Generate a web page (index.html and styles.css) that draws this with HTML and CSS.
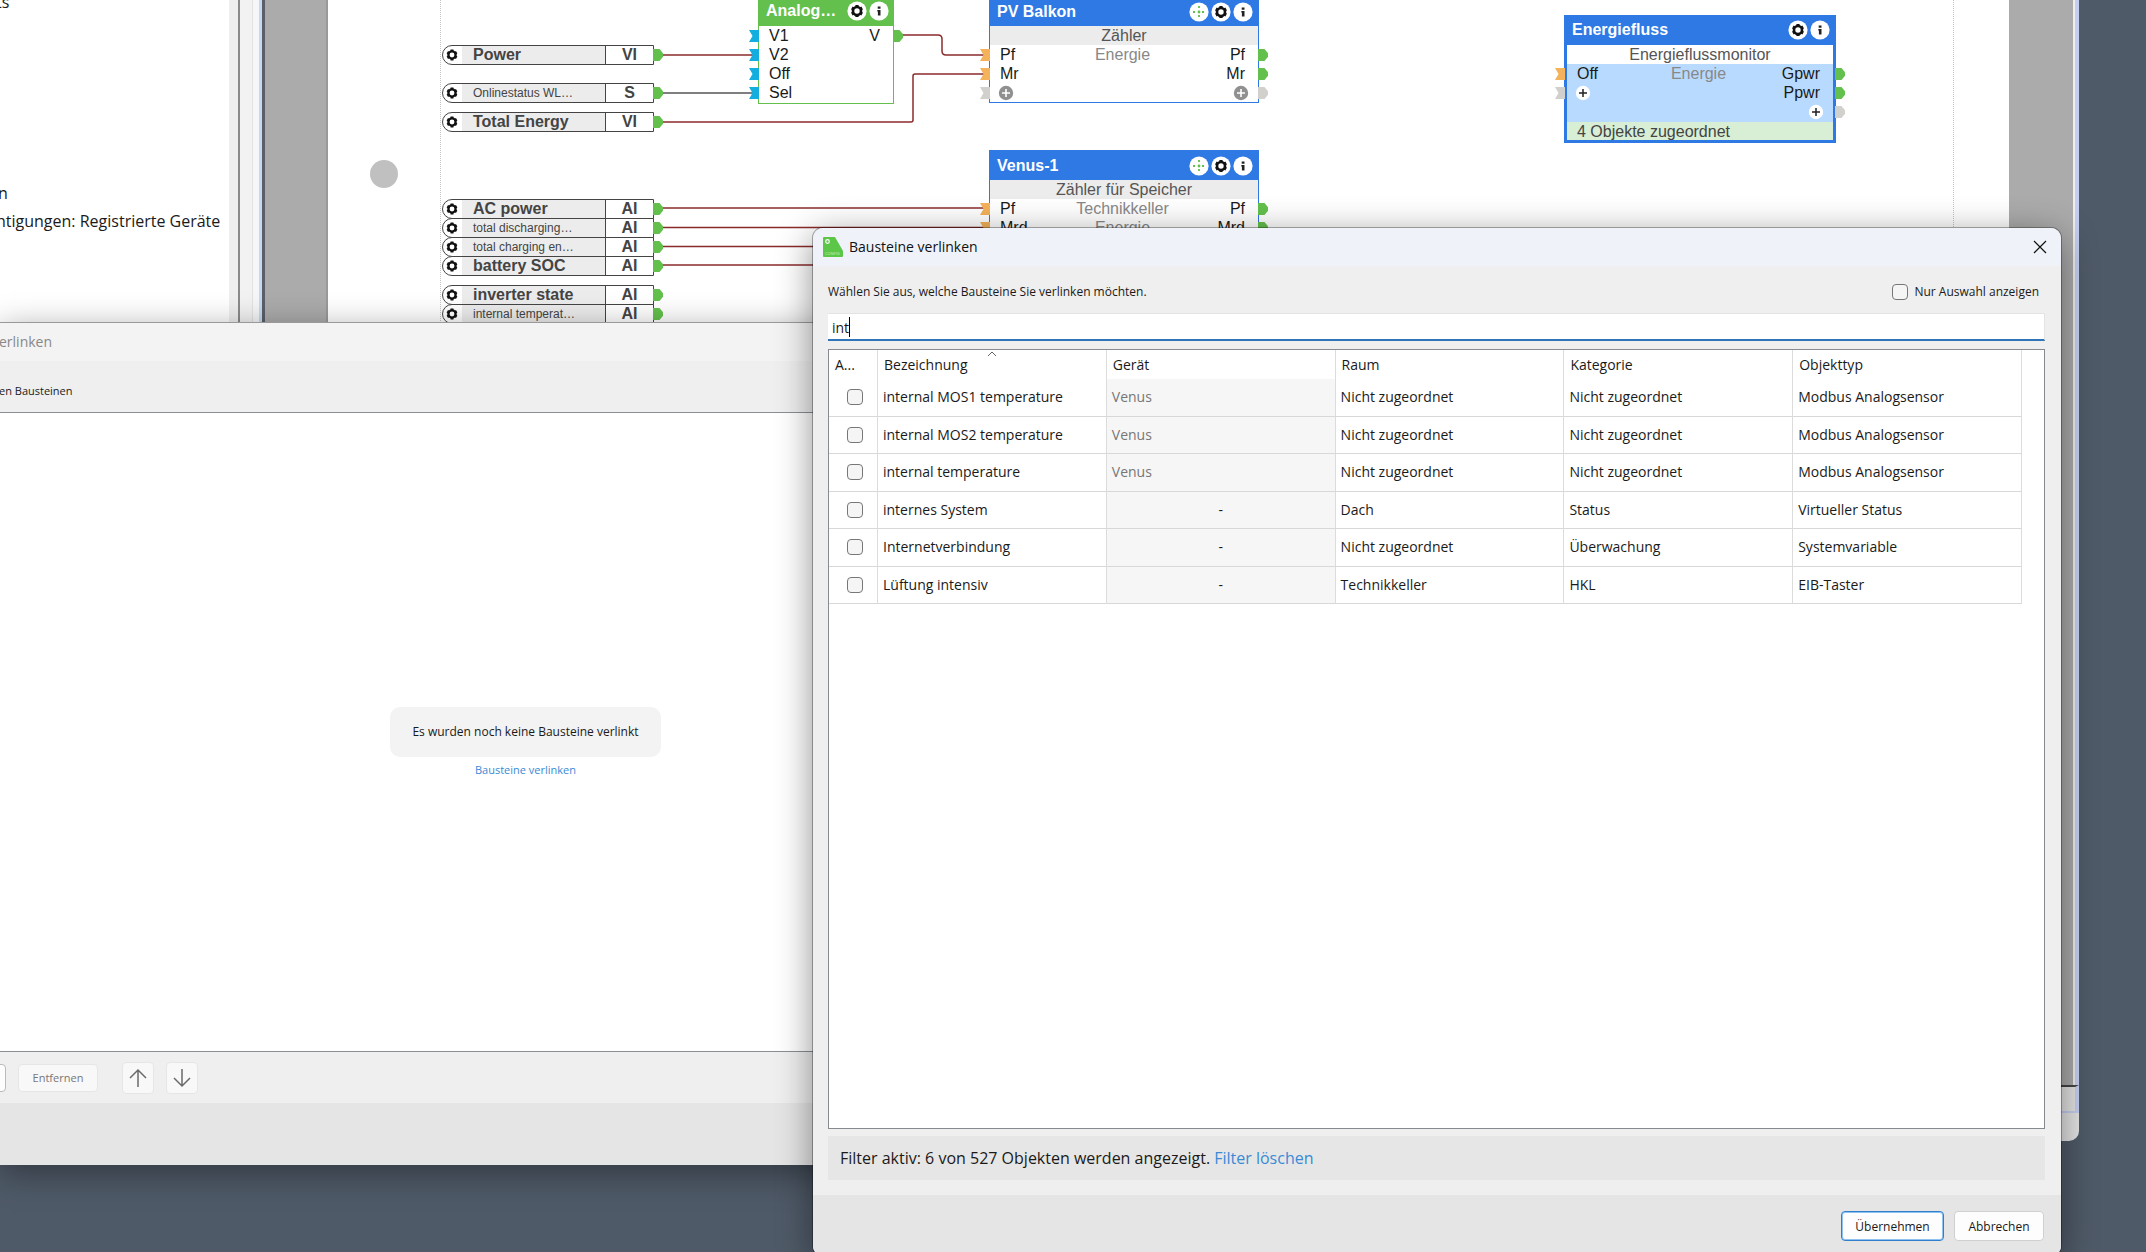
FILE: index.html
```html
<!DOCTYPE html>
<html lang="de">
<head>
<meta charset="utf-8">
<title>Bausteine verlinken</title>
<link rel="stylesheet" href="styles.css">
</head>
<body>
<svg class="defs" aria-hidden="true">
  <symbol id="gear" viewBox="0 0 20 20">
    <circle cx="10" cy="10" r="4" fill="none" stroke="#111" stroke-width="2.6"/>
    <path d="M10 4v2.500M10 13.500v2.500M4.800 7l2.100 1.200M13.100 11.800l2.100 1.200M4.800 13l2.100-1.200M13.100 8.200l2.100-1.200" stroke="#111" stroke-width="3.200"/>
  </symbol>
  <symbol id="gear-disc" viewBox="0 0 20 20"><circle cx="10" cy="10" r="9.600" fill="#fff"/><use href="#gear"/></symbol>
  <symbol id="info" viewBox="0 0 20 20"><circle cx="10" cy="10" r="9.600" fill="#fff"/><path d="M8.700 5.500h2.800v2.300h-2.800zM8.300 8.900h3.200v5.700h-2.600v-4h-.6z" fill="#222"/></symbol>
  <symbol id="move" viewBox="0 0 20 20"><circle cx="10" cy="10" r="9.600" fill="#fff"/><path d="M10 4v3M10 13v3M4 10h3M13 10h3M10 9v2" stroke="#5fc04a" stroke-width="1.800" stroke-dasharray="2 1"/><circle cx="10" cy="10" r="1.400" fill="#5fc04a"/></symbol>
  <symbol id="plus-grey" viewBox="0 0 16 16"><circle cx="8" cy="8" r="7.200" fill="#909090"/><path d="M8 4v8M4 8h8" stroke="#fff" stroke-width="1.600"/></symbol>
  <symbol id="plus-white" viewBox="0 0 16 16"><circle cx="8" cy="8" r="7.200" fill="#fff"/><path d="M8 4v8M4 8h8" stroke="#222" stroke-width="1.500"/></symbol>
</svg>

<main class="desktop">
  <section class="main-window">
    <div class="main-body">
      <ul class="tree">
        <li class="tree-first">ts</li>
        <li class="tree-mid">en</li>
        <li>htigungen: Registrierte Geräte</li>
      </ul>
      <div class="scroll-strip"></div>
      <div class="dock-gap"></div>
      <div class="dock-frame"></div>
      <div class="workspace"><div class="sheet"><div class="print-area"></div></div></div>
    </div>
    <div class="status-bar"></div>
    <div class="bottom-edge"></div>

    <div class="diagram">
      <div class="page-dot"></div>
      <svg class="wires" fill="none" stroke="#8a2b2b" stroke-width="1.500" aria-hidden="true">
        <path d="M662 55H754M662 122H911q2 0 2-2V76q0-2 2-2H984M902 35h36q4 0 4 4v12q0 4 4 4h38M662 208H984M662 227.500H984M662 246.500H984M662 265H984"/>
        <path stroke="#555" d="M662 93H754"/>
      </svg>

      <div class="io" style="left:442px;top:45px"><svg><use href="#gear"/></svg><b>Power</b><i>VI</i></div>
      <div class="io" style="left:442px;top:83px"><svg><use href="#gear"/></svg><span>Onlinestatus WL…</span><i>S</i></div>
      <div class="io" style="left:442px;top:112px"><svg><use href="#gear"/></svg><b>Total Energy</b><i>VI</i></div>
      <div class="io" style="left:442px;top:199px"><svg><use href="#gear"/></svg><b>AC power</b><i>AI</i></div>
      <div class="io" style="left:442px;top:218px"><svg><use href="#gear"/></svg><span>total discharging…</span><i>AI</i></div>
      <div class="io" style="left:442px;top:237px"><svg><use href="#gear"/></svg><span>total charging en…</span><i>AI</i></div>
      <div class="io" style="left:442px;top:256px"><svg><use href="#gear"/></svg><b>battery SOC</b><i>AI</i></div>
      <div class="io" style="left:442px;top:285px"><svg><use href="#gear"/></svg><b>inverter state</b><i>AI</i></div>
      <div class="io" style="left:442px;top:304px"><svg><use href="#gear"/></svg><span>internal temperat…</span><i>AI</i></div>

      <article class="node node-green" style="left:758px;top:-5px">
        <header><h3>Analog…</h3><svg><use href="#gear-disc"/></svg><svg><use href="#info"/></svg></header>
        <div class="row in-blue out"><span>V1</span><span></span><span>V</span></div>
        <div class="row in-blue"><span>V2</span></div>
        <div class="row in-blue"><span>Off</span></div>
        <div class="row in-blue"><span>Sel</span></div>
      </article>

      <article class="node" style="left:989px;top:-4px">
        <header><h3>PV Balkon</h3><svg><use href="#move"/></svg><svg><use href="#gear-disc"/></svg><svg><use href="#info"/></svg></header>
        <div class="kind">Zähler</div>
        <div class="row in out"><span>Pf</span><em>Energie</em><span>Pf</span></div>
        <div class="row in out"><span>Mr</span><em></em><span>Mr</span></div>
        <div class="row in-off out-off"><svg><use href="#plus-grey"/></svg><em></em><svg><use href="#plus-grey"/></svg></div>
      </article>

      <article class="node" style="left:989px;top:150px">
        <header><h3>Venus-1</h3><svg><use href="#move"/></svg><svg><use href="#gear-disc"/></svg><svg><use href="#info"/></svg></header>
        <div class="kind">Zähler für Speicher</div>
        <div class="row in out"><span>Pf</span><em>Technikkeller</em><span>Pf</span></div>
        <div class="row in out"><span>Mrd</span><em>Energie</em><span>Mrd</span></div>
      </article>

      <article class="node node-selected" style="left:1564px;top:15px">
        <header><h3>Energiefluss</h3><svg><use href="#gear-disc"/></svg><svg><use href="#info"/></svg></header>
        <div class="kind">Energieflussmonitor</div>
        <div class="row in out"><span>Off</span><em>Energie</em><span>Gpwr</span></div>
        <div class="row in-off out"><svg><use href="#plus-white"/></svg><em></em><span>Ppwr</span></div>
        <div class="row out-off"><span></span><em></em><svg><use href="#plus-white"/></svg></div>
        <div class="note">4 Objekte zugeordnet</div>
      </article>
    </div>
  </section>

  <section class="link-window">
    <div class="link-title">erlinken</div>
    <div class="link-label">en Bausteinen</div>
    <div class="link-list">
      <p class="empty">Es wurden noch keine Bausteine verlinkt</p>
      <a href="#">Bausteine verlinken</a>
    </div>
    <div class="link-tools">
      <button class="btn cut" type="button" aria-label="Hinzufügen"></button>
      <button class="btn" type="button" disabled>Entfernen</button>
      <button class="btn arrow first-arrow" type="button" disabled aria-label="Nach oben"><svg viewBox="0 0 20 20"><path d="M10 19V2M2 10l8-8 8 8"/></svg></button>
      <button class="btn arrow" type="button" disabled aria-label="Nach unten"><svg viewBox="0 0 20 20"><path d="M10 1v17M2 10l8 8 8-8"/></svg></button>
    </div>
    <div class="link-foot"></div>
  </section>

  <section class="dialog" role="dialog" aria-labelledby="dialog-title">
    <header class="dialog-title">
      <svg class="app-icon" viewBox="0 0 20 20"><path d="M0 1q0-1 1-1h11l8 14v5q0 1-1 1H1q-1 0-1-1z" fill="#5bc648"/><circle cx="4.500" cy="4.500" r="1.800" fill="none" stroke="#fff" stroke-width="1.200"/><text x="2" y="18" font-size="4" fill="#c9f0c0">CONFIG</text></svg>
      <h2 id="dialog-title">Bausteine verlinken</h2>
      <button class="close" type="button" aria-label="Schließen"><svg viewBox="0 0 14 14"><path d="M1 1l12 12M13 1L1 13"/></svg></button>
    </header>
    <div class="dialog-body">
      <div class="intro">
        <label for="search">Wählen Sie aus, welche Bausteine Sie verlinken möchten.</label>
        <label class="only"><input type="checkbox">Nur Auswahl anzeigen</label>
      </div>
      <div class="search-box"><input id="search" type="text" value="int"><span class="caret"></span></div>
      <div class="grid-box">
        <table>
          <colgroup><col class="c-check"><col><col><col><col><col></colgroup>
          <thead><tr><th>A...</th><th class="sorted">Bezeichnung<svg viewBox="0 0 10 6"><path d="M1 5l4-4 4 4"/></svg></th><th>Gerät</th><th>Raum</th><th>Kategorie</th><th>Objekttyp</th></tr></thead>
          <tbody>
            <tr><td><input type="checkbox" aria-label="internal MOS1 temperature"></td><td>internal MOS1 temperature</td><td>Venus</td><td>Nicht zugeordnet</td><td>Nicht zugeordnet</td><td>Modbus Analogsensor</td></tr>
            <tr><td><input type="checkbox" aria-label="internal MOS2 temperature"></td><td>internal MOS2 temperature</td><td>Venus</td><td>Nicht zugeordnet</td><td>Nicht zugeordnet</td><td>Modbus Analogsensor</td></tr>
            <tr><td><input type="checkbox" aria-label="internal temperature"></td><td>internal temperature</td><td>Venus</td><td>Nicht zugeordnet</td><td>Nicht zugeordnet</td><td>Modbus Analogsensor</td></tr>
            <tr><td><input type="checkbox" aria-label="internes System"></td><td>internes System</td><td class="none">-</td><td>Dach</td><td>Status</td><td>Virtueller Status</td></tr>
            <tr><td><input type="checkbox" aria-label="Internetverbindung"></td><td>Internetverbindung</td><td class="none">-</td><td>Nicht zugeordnet</td><td>Überwachung</td><td>Systemvariable</td></tr>
            <tr><td><input type="checkbox" aria-label="Lüftung intensiv"></td><td>Lüftung intensiv</td><td class="none">-</td><td>Technikkeller</td><td>HKL</td><td>EIB-Taster</td></tr>
          </tbody>
        </table>
      </div>
      <p class="filter">Filter aktiv: 6 von 527 Objekten werden angezeigt. <a href="#">Filter löschen</a></p>
    </div>
    <footer class="dialog-foot">
      <button class="btn primary" type="button">Übernehmen</button>
      <button class="btn" type="button">Abbrechen</button>
    </footer>
  </section>
</main>
</body>
</html>
```

FILE: styles.css
```css
* { box-sizing: border-box; }
body, h2, h3, p, ul { margin: 0; padding: 0; }
body { font: 14px/20px "Open Sans", "Noto Sans", sans-serif; color: #1a1a1a; }
a { color: #3a8ad6; text-decoration: none; }
svg { display: block; flex: none; }
.defs { position: absolute; width: 0; height: 0; }
.desktop { position: relative; height: 100vh; overflow: hidden; background: #4f5a68; }

/* Main window */
.main-window {
  position: absolute; left: 0; right: 67px; top: 0; bottom: 111px;
  display: flex; flex-direction: column; overflow: hidden;
  border-radius: 0 0 10px 0; background: #e4e4e4;
}
.main-body { flex: 1; display: flex; border-right: 4px solid #c5cef0; }
.tree { width: 229px; overflow: hidden; background: #fff; list-style: none; font-size: 16px; line-height: 28px; white-space: nowrap; }
.tree li { margin-left: -4px; }
.tree .tree-first { margin-top: -12px; }
.tree .tree-mid { margin-top: 163px; margin-left: -11px; }
.scroll-strip { width: 11px; background: #efefef; border-right: 2px solid #8a8a8a; }
.dock-gap { width: 13px; background: #f2f2f2; border-right: 1px solid #e2e2e2; }
.dock-frame { width: 12px; background: #f5f6f8; border-right: 3px solid #5a5f68; box-shadow: inset -3px 0 #c6d9f0; }
.workspace { flex: 1; display: flex; padding: 0 64px 0 61px; background: #ababab; border-right: 2px solid #eee; }
.sheet { flex: 1; display: flex; padding: 0 55px 0 112px; background: #fff; border-left: 2px solid #999; }
.print-area { flex: 1; border: 1px dotted #c4c4c4; border-width: 0 1px; }
.status-bar { height: 28px; border-top: 2px solid #444; border-right: 4px solid #c5cef0; border-bottom: 2px solid #c5cef0; }
.bottom-edge { height: 28px; }

/* Diagram */
.diagram { position: absolute; inset: 0; font: 16px/19px "Liberation Sans", Arial, sans-serif; }
.wires { position: absolute; inset: 0; width: 100%; height: 100%; }
.page-dot { position: absolute; left: 370px; top: 160px; width: 28px; height: 28px; border-radius: 50%; background: #c0c0c0; }
.io {
  position: absolute; display: flex; align-items: center; width: 212px; height: 20px;
  border: 1px solid #444; border-radius: 10px 0 0 10px; background: #fff; color: #444; line-height: 18px;
}
.io svg { width: 18px; height: 18px; margin-right: 1px; }
.io b, .io span { flex: 1; padding-left: 11px; background: #ececec; white-space: nowrap; overflow: hidden; }
.io span { font-size: 12px; }
.io i { width: 48px; border-left: 1px solid #444; font-style: normal; font-weight: bold; text-align: center; }
.io::after, .out::after, .out-off::after {
  content: ""; position: absolute; right: -10px; width: 10px; height: 12px; background: #63c04c;
  clip-path: polygon(0 0, 65% 0, 100% 35%, 100% 65%, 65% 100%, 0 100%);
}
.node { position: absolute; width: 270px; border: 1px solid #2f79e4; background: #fff; }
.node header { display: flex; align-items: center; gap: 2px; height: 29px; padding: 0 5px 0 7px; background: #2f79e4; color: #fff; }
.node header h3 { flex: 1; font-size: 16px; line-height: 20px; white-space: nowrap; }
.node header svg { width: 20px; height: 20px; }
.kind { height: 19px; background: #ececec; color: #555; text-align: center; }
.row { position: relative; display: grid; grid-template-columns: 1fr auto 1fr; align-items: center; height: 19px; padding: 0 13px 0 10px; }
.row em { color: #888; font-style: normal; }
.row > :nth-child(3) { justify-self: end; }
.row svg { width: 16px; height: 16px; margin-left: -2px; }
.row svg:nth-child(3) { margin-right: -4px; }
.row::after { top: 4px; }
.in::before, .in-blue::before, .in-off::before {
  content: ""; position: absolute; top: 4px; left: -10px; width: 10px; height: 12px; background: #f4b25a;
  clip-path: polygon(0 0, 100% 0, 100% 100%, 0 100%, 35% 50%);
}
.in-blue::before { background: #12aee0; }
.in-off::before, .out-off::after { background: #d2d0cc; }
.node-green { width: 136px; border-color: #63c04c; padding-bottom: 1px; }
.node.node-green header { height: 30px; padding-right: 4px; background: #63c04c; }
.node-selected { width: 272px; border-width: 0 3px 3px; background: #b8daff; }
.node.node-selected header { height: 30px; padding: 0 3px 0 5px; }
.node-selected .kind { background: #fff; }
.node-selected .out::after, .node-selected .out-off::after { right: -12px; }
.node-selected .in::before, .node-selected .in-off::before { left: -12px; }
.note { height: 18px; margin-top: 1px; padding-left: 10px; background: #d8eed5; color: #444; overflow: hidden; }

/* Window behind the dialog */
.link-window {
  position: absolute; left: 0; top: 322px; bottom: 87px; width: 1051px;
  display: flex; flex-direction: column; border-top: 1px solid #999; background: #efefef;
  box-shadow: 0 8px 32px rgba(0, 0, 0, .4);
}
.link-title { height: 38px; margin-left: -1px; line-height: 38px; color: #888; background: #f3f3f3; }
.link-label { height: 51px; padding-top: 20px; margin-left: -1px; font-size: 11px; }
.link-list {
  flex: 1; display: flex; flex-direction: column; align-items: center; justify-content: center; gap: 4px;
  background: #fff; border: 1px solid #8a8f94; border-width: 1px 0; padding-bottom: 8px; padding-top: 30px; font-size: 11px; line-height: 18px;
}
.empty { padding: 16px 22px; border-radius: 10px; background: #f3f3f3; font-size: 12px; }
.link-tools { display: flex; align-items: center; gap: 12px; height: 51px; }
.link-foot { height: 62px; background: #e5e5e5; }
.btn {
  height: 28px; padding: 0 12px; border: 1px solid #d0d0d0; border-radius: 4px; background: #fdfdfd;
  font: 12px/18px "Open Sans", "Noto Sans", sans-serif; color: #1a1a1a;
}
.btn:disabled { border-color: #e6e6e6; background: #f8f8f8; color: #777; }
.link-tools .btn { width: 80px; font-size: 11px; }
.link-tools .cut { width: 16px; margin-left: -10px; padding: 0; border-color: #bbb; }
.link-tools .arrow { width: 32px; height: 32px; padding: 5px; }
.first-arrow { margin-left: 12px; }
.arrow svg { width: 20px; height: 20px; fill: none; stroke: #6a6a6a; stroke-width: 1.5; }

/* Dialog */
.dialog {
  position: absolute; left: 813px; right: 85px; top: 228px; bottom: -4px;
  display: flex; flex-direction: column; overflow: hidden;
  border-radius: 10px; background: #efefef;
  box-shadow: 0 0 0 1px rgba(0, 0, 0, .3), 0 8px 36px rgba(0, 0, 0, .45);
}
.dialog-title { display: flex; align-items: center; height: 38px; padding: 0 14px 0 10px; background: #eff3f9; }
.dialog-title h2 { flex: 1; margin-left: 6px; font-size: 14px; font-weight: 400; line-height: 20px; color: #111; }
.app-icon { width: 20px; height: 20px; }
.close { padding: 0; border: 0; background: none; }
.close svg { width: 14px; height: 14px; fill: none; stroke: #111; stroke-width: 1.2; }
.dialog-body { flex: 1; display: flex; flex-direction: column; padding: 13px 16px 15px 15px; }
.intro { display: flex; justify-content: space-between; align-items: center; height: 26px; padding-right: 6px; font-size: 12px; line-height: 16px; }
.only { display: flex; align-items: center; gap: 6px; }
input[type="checkbox"] { appearance: none; display: block; width: 16px; height: 16px; margin: 0; border: 1px solid #777; border-radius: 4px; background: #f5f5f5; }
.search-box { position: relative; margin-top: 8px; }
.search-box input {
  display: block; width: 100%; height: 28px; padding: 1px 4px 0; border: 1px solid #e4e4e4; border-width: 1px 1px 2px 0;
  border-bottom-color: #2f75b8; background: #fff; color: #1a1a1a; font: inherit; outline: 0;
}
.caret { position: absolute; left: 21px; top: 4px; width: 1px; height: 20px; background: #000; }
.grid-box { flex: 1; margin-top: 8px; padding-right: 22px; border: 1px solid #868b91; background: #fff; }
table { width: 100%; height: 254px; table-layout: fixed; border-collapse: separate; border-spacing: 0; line-height: 18px; }
.c-check { width: 49px; }
th, td { padding: 0 5px; border-right: 1px solid #dcdcdc; text-align: left; font-weight: 400; }
th { position: relative; height: 29px; padding-left: 6px; }
th svg { position: absolute; left: 50%; top: 1px; width: 10px; height: 6px; margin-left: -5px; fill: none; stroke: #666; stroke-width: 1; }
td { border-bottom: 1px solid #d8d8d8; }
td:first-child { padding: 0 0 0 18px; }
td:nth-child(3) { background: #f6f6f6; color: #777; }
td.none { color: #1a1a1a; text-align: center; }
.filter { margin-top: 7px; padding: 13px 12px 12px; background: #e6e6e6; font-size: 16px; line-height: 19px; }
.dialog-foot { display: flex; justify-content: flex-end; gap: 10px; height: 61px; padding: 16px 17px 0 0; background: #e5e5e5; }
.dialog-foot .btn { width: 90px; height: 30px; padding: 1px 0 0; }
.dialog-foot .primary { width: 103px; border: 1px solid #2f7fcd; box-shadow: inset 0 0 0 1px #8fc2f0; }
```
